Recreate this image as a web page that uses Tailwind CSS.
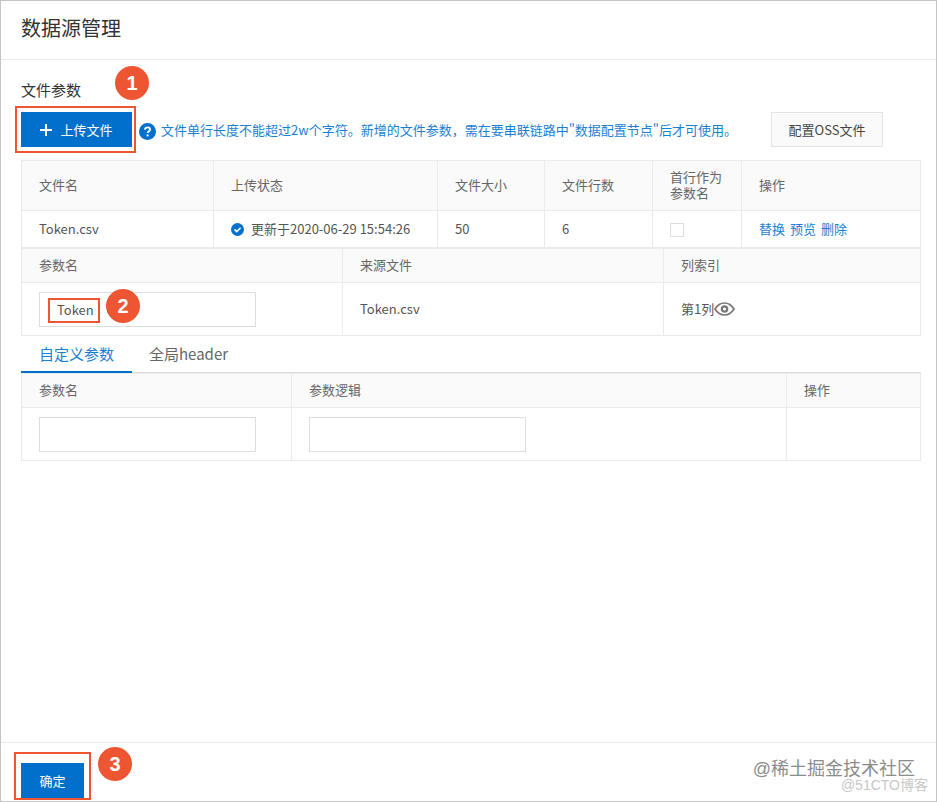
<!DOCTYPE html>
<html lang="zh-CN">
  <head>
    <meta charset="UTF-8" />
    <meta name="viewport" content="width=device-width, initial-scale=1.0" />
    <title>数据源管理</title>
    <script src="https://cdn.jsdelivr.net/npm/@tailwindcss/browser@4"></script>
  </head>
  <body
    class="bg-white text-[13px] leading-4 text-[#555] font-['Noto_Sans_CJK_SC',sans-serif]"
  >
    <div class="min-h-screen flex flex-col border border-[#c4c4c4]">
      <header class="h-[59px] pl-5 pb-1 flex items-center border-b border-[#ebebeb]">
        <h1 class="text-[20px] leading-7 text-[#333]">数据源管理</h1>
      </header>

      <main class="flex-1 pl-5 pr-[15px] pt-[18px]">
        <div class="relative">
          <h2 class="text-[15px] leading-6 text-[#333]">文件参数</h2>
          <span
            class="absolute left-[94px] -top-3 size-[34px] rounded-full bg-[#ee5633] text-white text-[20px] font-bold font-['Liberation_Sans',sans-serif] flex items-center justify-center"
            >1</span
          >
        </div>

        <!-- upload toolbar -->
        <div class="mt-[10px] flex items-center">
          <div class="relative">
            <button
              type="button"
              class="h-[35px] w-[111px] bg-[#0070cc] text-white flex items-center justify-center gap-2"
            >
              <svg class="size-3" viewBox="0 0 12 12" stroke="currentColor" stroke-width="2">
                <path d="M6 0v12M0 6h12" />
              </svg>
              上传文件
            </button>
            <div class="absolute -left-[6px] -right-[4px] -inset-y-[6px] border-2 border-[#ee5633] pointer-events-none"></div>
          </div>
          <svg class="ml-[7px] mt-1 size-[17px]" viewBox="0 0 17 17" fill="none">
            <circle cx="8.5" cy="8.5" r="8.5" fill="#0070cc" />
            <path
              d="M6 6.8C6 5.2 7 4.3 8.5 4.3s2.6.9 2.6 2.2c0 1.6-2.5 1.8-2.5 3.6"
              stroke="#fff"
              stroke-width="1.8"
            />
            <circle cx="8.6" cy="12.4" r="1.1" fill="#fff" />
          </svg>
          <p class="ml-[5px] text-[#1a7fd4] whitespace-nowrap">
            文件单行长度不能超过2w个字符。新增的文件参数，需在要串联链路中"数据配置节点"后才可使用。
          </p>
          <button
            type="button"
            class="ml-auto mr-[38px] h-[35px] w-28 shrink-0 border border-[#e3e3e3] bg-[#fafafa] text-[#444]"
          >
            配置OSS文件
          </button>
        </div>

        <!-- uploaded files -->
        <table class="mt-[13px] w-full table-fixed border-collapse text-left">
          <colgroup>
            <col class="w-[192px]" />
            <col class="w-[224px]" />
            <col class="w-[107px]" />
            <col class="w-[108px]" />
            <col class="w-[89px]" />
            <col />
          </colgroup>
          <thead class="bg-[#fafafa] text-[#666]">
            <tr class="h-[50px]">
              <th class="border border-[#ebebeb] px-[17px] pb-[2px] font-normal">文件名</th>
              <th class="border border-[#ebebeb] px-[17px] pb-[2px] font-normal">上传状态</th>
              <th class="border border-[#ebebeb] px-[17px] pb-[2px] font-normal">文件大小</th>
              <th class="border border-[#ebebeb] px-[17px] pb-[2px] font-normal">文件行数</th>
              <th class="border border-[#ebebeb] px-[17px] pb-[2px] font-normal">首行作为参数名</th>
              <th class="border border-[#ebebeb] px-[17px] pb-[2px] font-normal">操作</th>
            </tr>
          </thead>
          <tbody>
            <tr class="h-[37px]">
              <td class="border border-[#ebebeb] px-[17px]">Token.csv</td>
              <td class="border border-[#ebebeb] px-[17px]">
                <div class="flex items-center gap-[7px] whitespace-nowrap">
                  <svg class="size-[13px] shrink-0" viewBox="0 0 13 13" fill="none">
                    <circle cx="6.5" cy="6.5" r="6.5" fill="#0070cc" />
                    <path d="M3.5 6.4l2.2 2.2 3.9-3.9" stroke="#fff" stroke-width="1.6" />
                  </svg>
                  更新于2020-06-29 15:54:26
                </div>
              </td>
              <td class="border border-[#ebebeb] px-[17px]">50</td>
              <td class="border border-[#ebebeb] px-[17px]">6</td>
              <td class="border border-[#ebebeb] px-[17px]">
                <input
                  type="checkbox"
                  aria-label="首行作为参数名"
                  class="block mt-[2px] size-[14px] appearance-none border border-[#dedede] bg-white"
                />
              </td>
              <td class="border border-[#ebebeb] px-[17px] text-[#1a7fd4]">
                <div class="flex gap-[5px]">
                  <a href="#">替换</a>
                  <a href="#">预览</a>
                  <a href="#">删除</a>
                </div>
              </td>
            </tr>
          </tbody>
        </table>

        <!-- file columns -->
        <table class="w-full table-fixed border-collapse text-left">
          <colgroup>
            <col class="w-[321px]" />
            <col class="w-[321px]" />
            <col />
          </colgroup>
          <thead class="bg-[#fafafa] text-[#666]">
            <tr class="h-[34px]">
              <th class="border border-[#ebebeb] px-[17px] pb-[2px] font-normal">参数名</th>
              <th class="border border-[#ebebeb] px-[17px] pb-[2px] font-normal">来源文件</th>
              <th class="border border-[#ebebeb] px-[17px] pb-[2px] font-normal">列索引</th>
            </tr>
          </thead>
          <tbody>
            <tr class="h-[53px]">
              <td class="border border-[#ebebeb] px-[17px]">
                <div class="relative w-[217px]">
                  <input
                    type="text"
                    value="Token"
                    aria-label="参数名"
                    class="block h-[35px] w-full border border-[#dedede] px-[17px]"
                  />
                  <div class="absolute left-[9px] top-[6px] h-[25px] w-[52px] border-2 border-[#ee5633] pointer-events-none"></div>
                  <span
                    class="absolute left-[67px] -top-[3px] size-[34px] rounded-full bg-[#ee5633] text-white text-[20px] font-bold font-['Liberation_Sans',sans-serif] flex items-center justify-center"
                    >2</span
                  >
                </div>
              </td>
              <td class="border border-[#ebebeb] px-[17px]">Token.csv</td>
              <td class="border border-[#ebebeb] px-[17px]">
                <div class="flex items-center">
                  第1列
                  <svg class="h-[14px] w-[21px]" viewBox="0 0 21 14" fill="none" stroke="#777">
                    <path
                      d="M1 7C3.5 3 6.6 1 10.5 1S17.5 3 20 7c-2.5 4-5.6 6-9.500 6S3.5 11 1 7z"
                      stroke-width="1.7"
                    />
                    <circle cx="10.5" cy="7" r="2.7" stroke-width="2.2" />
                  </svg>
                </div>
              </td>
            </tr>
          </tbody>
        </table>

        <!-- tabs -->
        <div class="flex h-[37px] border-b border-[#dcdcdc] text-[15px]" role="tablist">
          <button
            type="button"
            role="tab"
            aria-selected="true"
            class="h-[37px] w-[111px] border-b-2 border-[#0070cc] text-[#1a7fd4]"
          >
            自定义参数
          </button>
          <button type="button" role="tab" aria-selected="false" class="px-[17px] text-[#666]">
            全局header
          </button>
        </div>

        <table class="w-full table-fixed border-collapse text-left">
          <colgroup>
            <col class="w-[270px]" />
            <col class="w-[495px]" />
            <col />
          </colgroup>
          <thead class="bg-[#fafafa] text-[#666]">
            <tr class="h-[34px]">
              <th class="border border-[#ebebeb] px-[17px] pb-[2px] font-normal">参数名</th>
              <th class="border border-[#ebebeb] px-[17px] pb-[2px] font-normal">参数逻辑</th>
              <th class="border border-[#ebebeb] px-[17px] pb-[2px] font-normal">操作</th>
            </tr>
          </thead>
          <tbody>
            <tr class="h-[53px]">
              <td class="border border-[#ebebeb] px-[17px]">
                <input
                  type="text"
                  aria-label="参数名"
                  class="block h-[35px] w-[217px] border border-[#dedede] px-[17px]"
                />
              </td>
              <td class="border border-[#ebebeb] px-[17px]">
                <input
                  type="text"
                  aria-label="参数逻辑"
                  class="block h-[35px] w-[217px] border border-[#dedede] px-[17px]"
                />
              </td>
              <td class="border border-[#ebebeb] px-[17px]"></td>
            </tr>
          </tbody>
        </table>
      </main>

      <footer class="relative flex border-t border-[#ebebeb] pl-5 pt-5 pb-[3px]">
        <div class="relative">
          <button type="button" class="block h-[35px] w-[63px] bg-[#0070cc] text-white">确定</button>
          <div class="absolute -inset-x-[7px] -top-[11px] -bottom-[2px] border-2 border-[#ee5633] pointer-events-none"></div>
          <span
            class="absolute left-[77px] -top-4 size-[34px] rounded-full bg-[#ee5633] text-white text-[20px] font-bold font-['Liberation_Sans',sans-serif] flex items-center justify-center"
            >3</span
          >
        </div>
        <!-- watermarks -->
        <span class="absolute right-[21px] top-[14px] text-[18px] leading-6 text-[#8c8c8c] font-['Liberation_Sans','Noto_Sans_CJK_SC',sans-serif]"
          >@稀土掘金技术社区</span
        >
        <span class="absolute right-2 bottom-2 text-[14px] leading-4 text-[#c8c8c8] font-['Liberation_Sans','Noto_Sans_CJK_SC',sans-serif]"
          >@51CTO博客</span
        >
      </footer>
    </div>
  </body>
</html>
